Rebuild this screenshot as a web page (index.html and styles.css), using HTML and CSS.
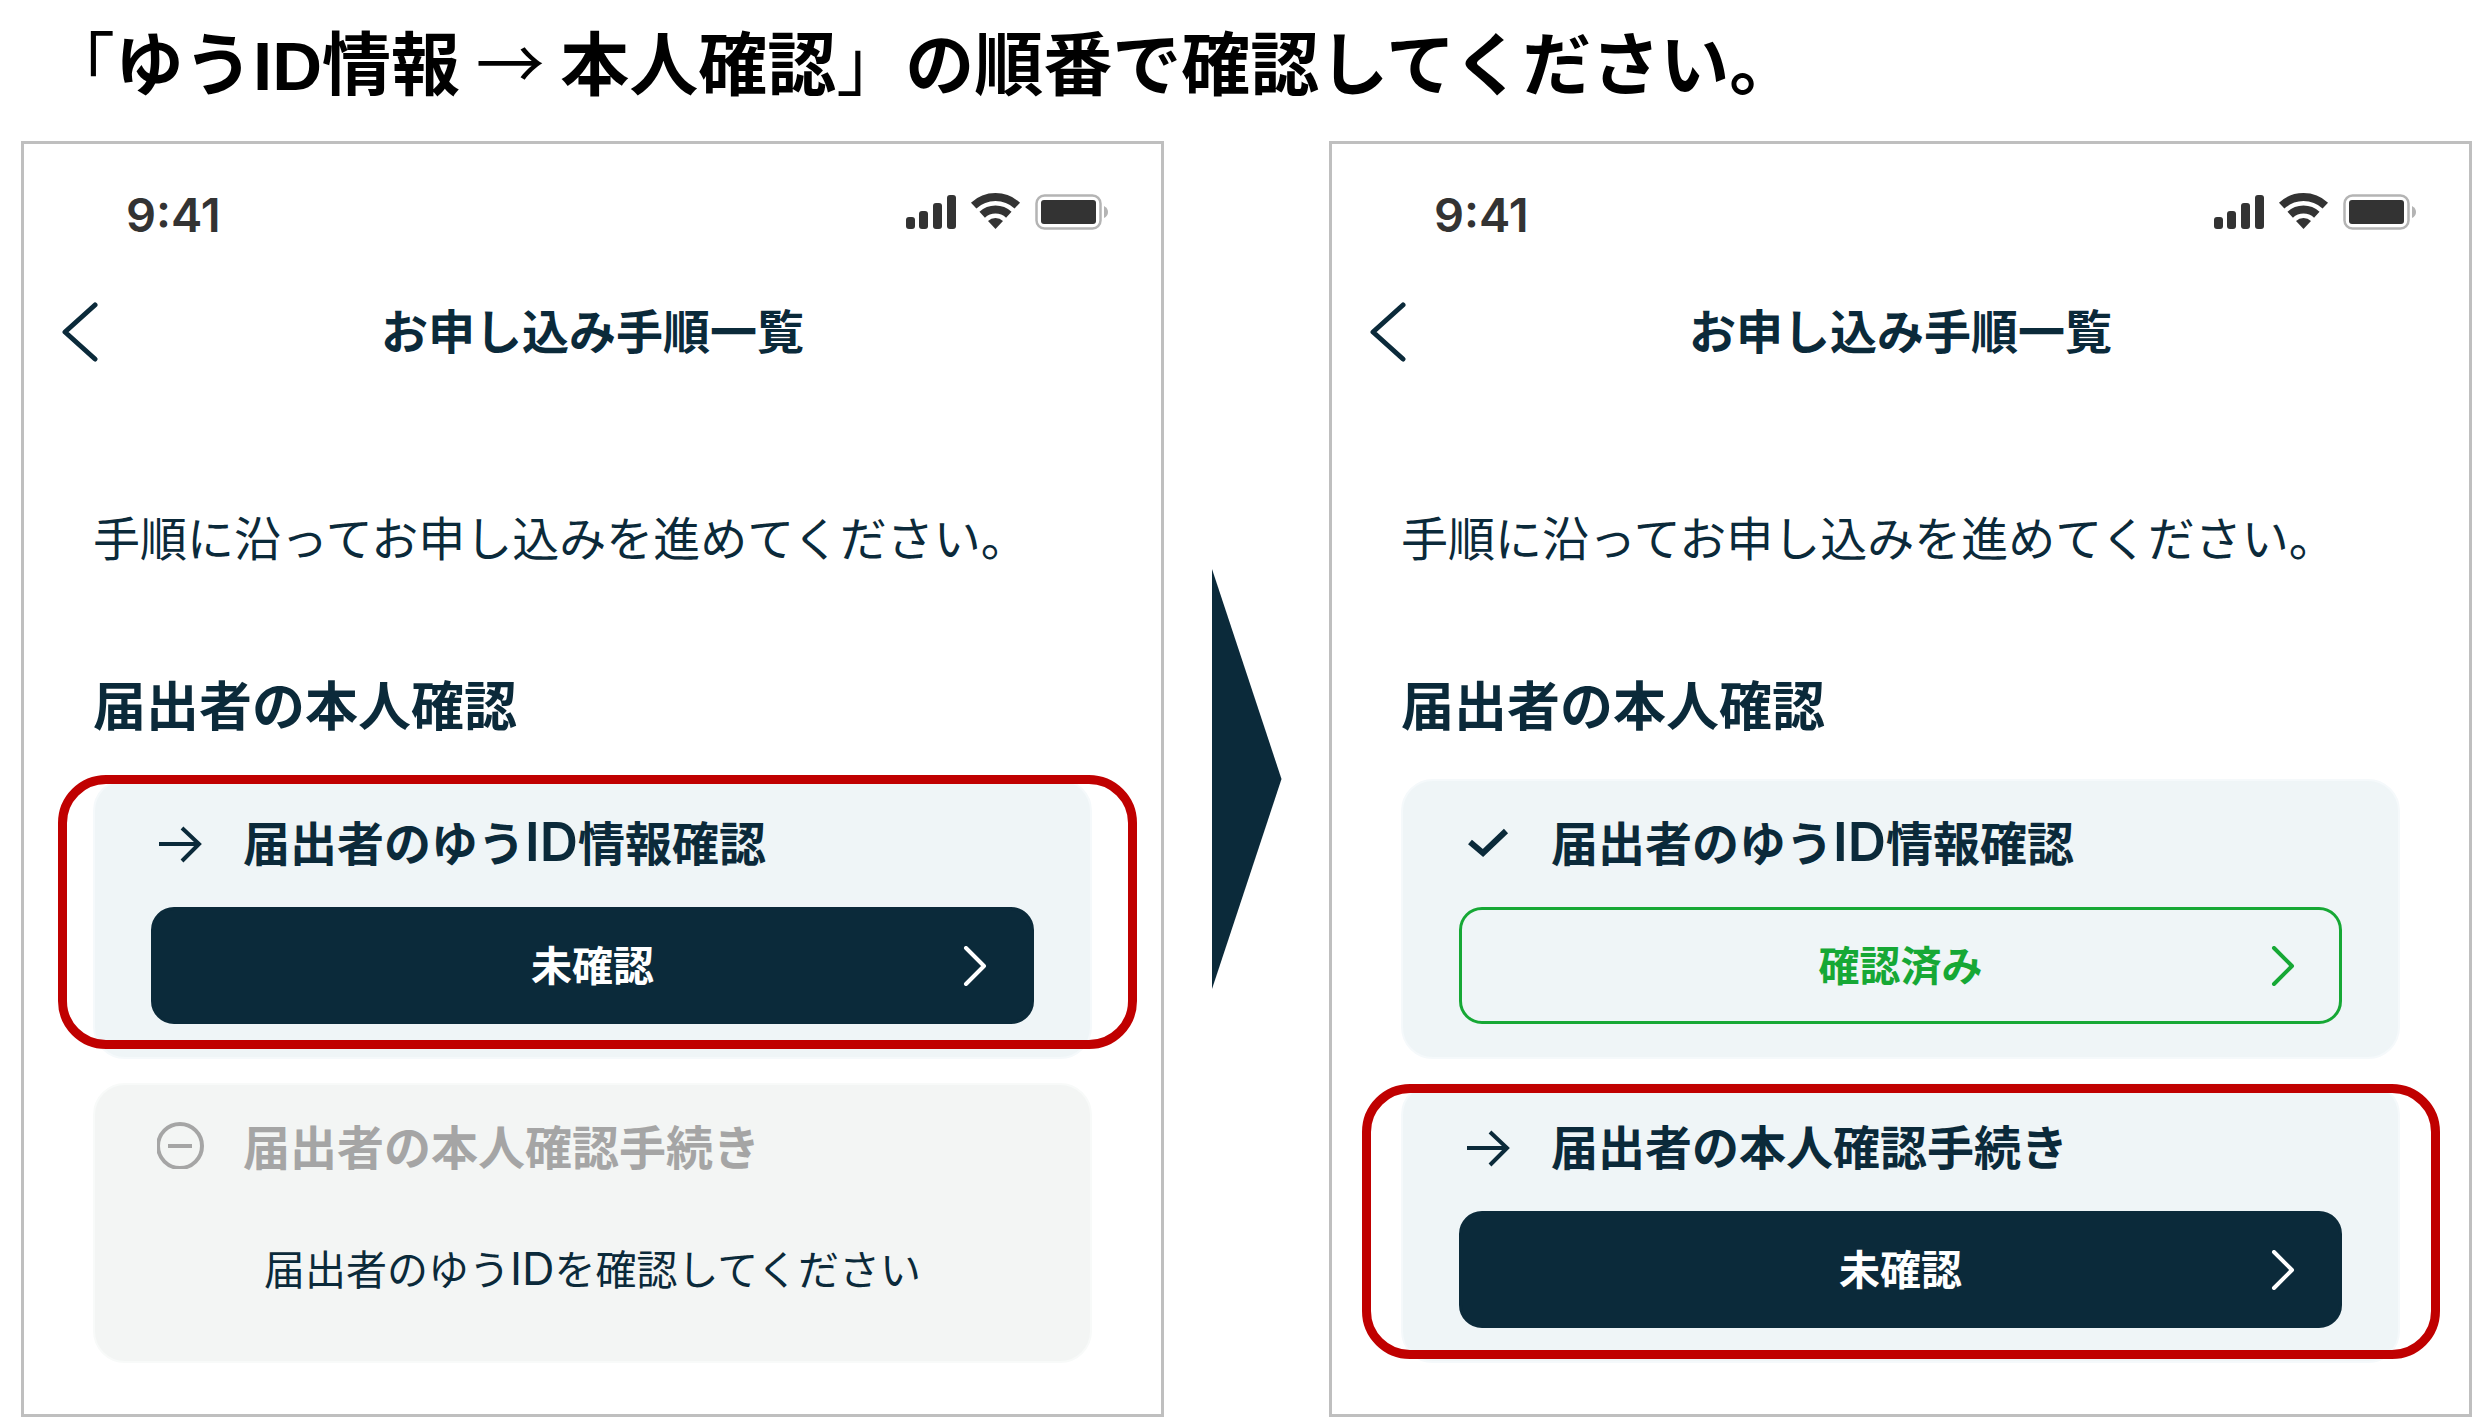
FILE: index.html
```
<!DOCTYPE html>
<html lang="ja">
<head>
<meta charset="UTF-8">
<meta name="viewport" content="width=device-width, initial-scale=1.0">
<title>お申し込み手順一覧</title>
<link rel="stylesheet" href="styles.css">
</head>
<body>
<svg class="sprite" width="0" height="0" aria-hidden="true">
    <symbol id="status-icons" viewBox="0 0 204 38">
        <g fill="#333">
            <rect x="0" y="24" width="9" height="12" rx="3"/>
            <rect x="13" y="18" width="9" height="18" rx="3"/>
            <rect x="27" y="10" width="9" height="26" rx="3"/>
            <rect x="41" y="2" width="9" height="34" rx="3"/>
            <path d="M89.5 36L82 28A11 11 0 0 1 97 28Z"/>
            <rect x="135" y="7" width="55" height="24" rx="3"/>
        </g>
        <g fill="none" stroke="#333" stroke-width="8">
            <path d="M67.7 12.6A32 32 0 0 1 111.3 12.6"/>
            <path d="M76.2 21.7A19.5 19.5 0 0 1 102.8 21.7"/>
        </g>
        <rect x="130.5" y="2.5" width="64" height="33" rx="8" fill="none" stroke="#b4b4b4" stroke-width="2.5"/>
        <path d="M198 13Q202 15 202 19Q202 23 198 25Z" fill="#b4b4b4"/>
    </symbol>
    <symbol id="back" viewBox="0 0 36 60">
        <path d="M33 3L3 30L33 57" fill="none" stroke="currentColor" stroke-width="5" stroke-linecap="round" stroke-linejoin="round"/>
    </symbol>
    <symbol id="next" viewBox="0 0 24 40">
        <path d="M3 2L21 20L3 38" fill="none" stroke="currentColor" stroke-width="4" stroke-linecap="round" stroke-linejoin="round"/>
    </symbol>
    <symbol id="arrow" viewBox="0 0 48 48">
        <path d="M2 27H42M25 11L42 27L25 44" fill="none" stroke="currentColor" stroke-width="4"/>
    </symbol>
    <symbol id="check" viewBox="0 0 48 48">
        <path d="M5 25L18 36L41 14" fill="none" stroke="currentColor" stroke-width="6"/>
    </symbol>
    <symbol id="minus" viewBox="0 0 48 48">
        <g fill="none" stroke="currentColor" stroke-width="4">
            <circle cx="23" cy="25" r="22"/>
            <path d="M11 25H35"/>
        </g>
    </symbol>
</svg>

<h1 class="headline"><span class="thin">「</span>ゆう<span class="latin">ID</span>情報 <span class="thin">→</span> 本人確認<span class="thin">」</span>の順番で確認してください。</h1>

<div class="steps">
    <section class="phone">
        <div class="status-bar">
            <span class="time">9:41</span>
            <svg class="status-icons"><use href="#status-icons"/></svg>
        </div>
        <div class="nav">
            <button class="back" aria-label="戻る"><svg><use href="#back"/></svg></button>
            <h2>お申し込み手順一覧</h2>
        </div>
        <p class="lead">手順に沿ってお申し込みを進めてください。</p>
        <h3 class="section-title">届出者の本人確認</h3>
        <div class="card">
            <h4><svg><use href="#arrow"/></svg><span>届出者のゆう<span class="latin">ID</span>情報確認</span></h4>
            <button class="action"><span>未確認</span><svg><use href="#next"/></svg></button>
            <div class="mark mark-first"></div>
        </div>
        <div class="card disabled">
            <h4><svg><use href="#minus"/></svg><span>届出者の本人確認手続き</span></h4>
            <p class="note">届出者のゆう<span class="latin">ID</span>を確認してください</p>
        </div>
    </section>

    <div class="between"><div class="triangle"></div></div>

    <section class="phone">
        <div class="status-bar">
            <span class="time">9:41</span>
            <svg class="status-icons"><use href="#status-icons"/></svg>
        </div>
        <div class="nav">
            <button class="back" aria-label="戻る"><svg><use href="#back"/></svg></button>
            <h2>お申し込み手順一覧</h2>
        </div>
        <p class="lead">手順に沿ってお申し込みを進めてください。</p>
        <h3 class="section-title">届出者の本人確認</h3>
        <div class="card">
            <h4><svg><use href="#check"/></svg><span>届出者のゆう<span class="latin">ID</span>情報確認</span></h4>
            <button class="action done"><span>確認済み</span><svg><use href="#next"/></svg></button>
        </div>
        <div class="card">
            <h4><svg><use href="#arrow"/></svg><span>届出者の本人確認手続き</span></h4>
            <button class="action"><span>未確認</span><svg><use href="#next"/></svg></button>
            <div class="mark mark-second"></div>
        </div>
    </section>
</div>
</body>
</html>
```
FILE: styles.css
```
* {
    box-sizing:border-box;
}
body {
    margin:0; background:#fff; color:#0b2a3a;
    font-family:'Noto Sans CJK JP',sans-serif;
}
h1, h2, h3, h4, p {
    margin:0;
}
button {
    font-family:inherit; cursor:pointer;
}
svg {
    display:block;
}
.sprite {
    position:absolute;
}
.latin {
    font-family:Inter,sans-serif; line-height:1;
}
.headline {
    padding-left:46px; margin-bottom:21px;
    font-size:69px; line-height:120px; color:#000;
}
.headline .thin {
    font-weight:400;
}
.headline .latin {
    font-family:'Liberation Sans',sans-serif;
}
.steps {
    display:flex; padding-left:21px;
}

/* phone screen */
.phone {
    flex:1; padding:38px 0 51px;
    border:3px solid #bfbfbf;
}
.status-bar {
    display:flex; justify-content:space-between; align-items:center;
    height:60px; padding:0 51px 0 102px;
}
.time {
    padding-top:4px;
    font-family:Inter,sans-serif; font-size:47px; font-weight:600; color:#333;
}
.status-icons {
    width:204px; height:38px;
}
.nav {
    display:grid; grid-template-columns:1fr auto 1fr; align-items:center;
    height:80px; margin-top:50px; padding:0 38px;
}
.nav h2 {
    padding-bottom:6px; font-size:47px; line-height:60px;
}
.back {
    justify-self:start; padding:0; border:none; background:none; color:inherit;
}
.back svg {
    width:36px; height:60px;
}
.lead {
    margin:134px 69px 0; font-size:47px; line-height:60px;
}
.section-title {
    margin:102px 69px 41px; font-size:53px; line-height:70px;
}

/* procedure cards */
.card {
    position:relative; margin:0 69px; padding:30px 56px 33px;
    background:#eff5f7; border:2px solid #f5f9fb; border-radius:32px;
}
.card + .card {
    margin-top:24px;
}
.card h4 {
    display:flex; align-items:center; gap:38px;
    height:60px; margin-bottom:36px; padding-left:6px;
    font-size:47px; line-height:60px;
}
.card h4 svg {
    width:48px; height:48px;
}
.card h4 .latin {
    font-size:53px; font-weight:600;
}
.disabled {
    background:#f3f5f4; border-color:#f8faf9;
}
.disabled h4 {
    color:#a5a5a5;
}
.action {
    display:grid; grid-template-columns:1fr auto 1fr; align-items:center;
    width:100%; height:117px; padding:0 44px;
    border:3px solid #0b2a3a; border-radius:23px;
    background:#0b2a3a; color:#fff; font-size:41px; font-weight:700;
}
.action span {
    grid-column:2; padding-bottom:6px;
}
.action svg {
    justify-self:end; width:24px; height:40px;
}
.done {
    background:transparent; border-color:#16a835; color:#16a835;
}
.note {
    height:117px; font-size:41px; line-height:112px; text-align:center;
}
.note .latin {
    font-size:45px;
}

/* red frame over the card to look at */
.mark {
    position:absolute; border:9px solid #c00000; border-radius:48px;
    pointer-events:none;
}
.mark-first {
    top:-6px; right:-47px; bottom:8px; left:-37px;
}
.mark-second {
    top:-1px; right:-42px; bottom:2px; left:-41px;
}

.between {
    display:flex; justify-content:center; align-items:center; width:165px;
}
.triangle {
    width:70px; height:423px; background:#0b2a3a;
    clip-path:polygon(0 0, 100% 50%, 0 100%);
}
```
